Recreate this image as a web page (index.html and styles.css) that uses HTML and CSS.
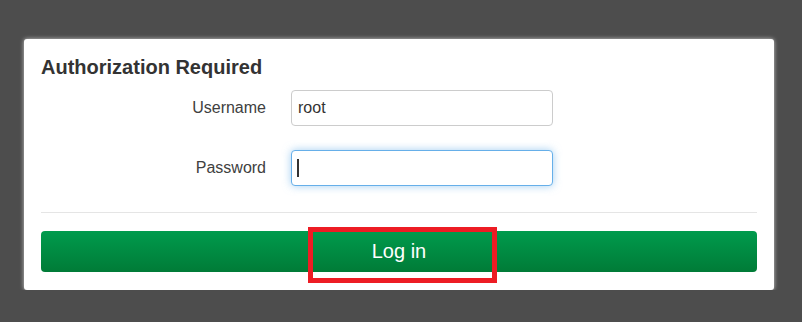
FILE: index.html
```html
<!DOCTYPE html>
<html lang="en">
<head>
  <meta charset="UTF-8" />
  <meta name="viewport" content="width=device-width, initial-scale=1.0"/>
  <title>Authorization Required</title>
  <link rel="stylesheet" href="styles.css">
</head>
<body>
  <div class="card">
    <h2 class="title">Authorization Required</h2>
    <div class="fields">
      <label class="label" for="username">Username</label>
      <input class="field" id="username" type="text" value="root" />

      <label class="label" for="password">Password</label>
      <div class="field-wrap">
        <input class="field focused" id="password" type="password" />
        <span class="caret"></span>
      </div>
    </div>
    <hr class="divider" />
    <div class="actions">
      <button class="login" type="button">Log in</button>
      <span class="highlight"></span>
    </div>
  </div>
</body>
</html>
```

FILE: styles.css
```css
body {
  margin: 0;
  padding: 39px 0 0 24px;
  background: #4d4d4d;
  font-family: 'Liberation Sans', Arial, sans-serif;
  color: #404040;
}

.card {
  box-sizing: border-box;
  width: 750px;
  height: 251px;
  padding: 17px 17px 18px;
  background: #fff;
  border-radius: 3px;
  box-shadow: 0 0 4px rgba(255, 255, 255, 0.7);
}

.title {
  margin: 0;
  font-size: 20px;
  line-height: 22px;
  font-weight: bold;
  color: #333;
}

.fields {
  display: grid;
  grid-template-columns: 225px 262px;
  column-gap: 25px;
  row-gap: 24px;
  align-items: center;
  margin-top: 12px;
}

.label {
  text-align: right;
  font-size: 16px;
  color: #404040;
}

.field-wrap {
  position: relative;
  height: 36px;
}

.field {
  box-sizing: border-box;
  display: block;
  width: 262px;
  height: 36px;
  margin: 0;
  padding: 0 6px;
  border: 1px solid #ccc;
  border-radius: 4px;
  font-family: inherit;
  font-size: 16px;
  color: #333;
  outline: none;
}

.field.focused {
  border-color: #66afe9;
  box-shadow: 0 0 8px rgba(102, 175, 233, 0.6);
}

.caret {
  position: absolute;
  left: 6px;
  top: 9px;
  width: 2px;
  height: 18px;
  background: #333;
}

.divider {
  margin: 26px 0 18px;
  border: 0;
  border-top: 1px solid #e5e5e5;
}

.actions {
  position: relative;
}

.login {
  display: block;
  width: 100%;
  height: 41px;
  margin: 0;
  border: 0;
  border-radius: 4px;
  background: linear-gradient(#009b4d, #007b37);
  color: #fff;
  font-family: inherit;
  font-size: 20px;
  cursor: pointer;
}

.highlight {
  position: absolute;
  left: 267px;
  top: -4px;
  box-sizing: border-box;
  width: 189px;
  height: 56px;
  border: 5px solid #ed1c24;
}
```
